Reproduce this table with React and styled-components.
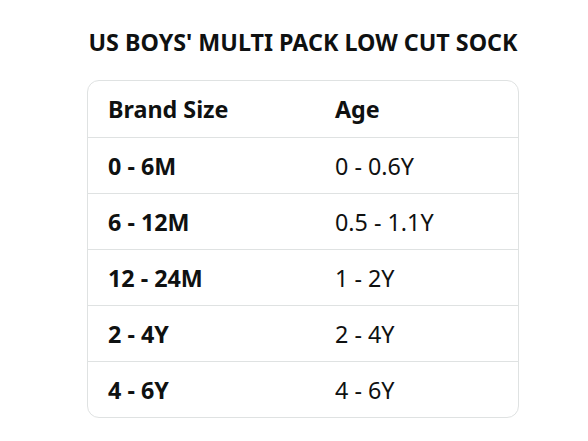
import React from "react";
import styled, { createGlobalStyle } from "styled-components";

const Global = createGlobalStyle`
  html, body { margin: 0; padding: 0; background: #ffffff; }
  body { font-family: "Noto Sans", "Liberation Sans", sans-serif; color: #0f1111; }
`;

const Page = styled.div`
  width: 588px;
  height: 441px;
  box-sizing: border-box;
  padding: 27px 0 0 87px;
`;

const Title = styled.h2`
  margin: 0 0 22px 0;
  width: 432px;
  text-align: center;
  font-size: 23.3px;
  font-weight: 700;
  line-height: 31px;
  letter-spacing: 0;
`;

const Table = styled.div`
  width: 432px;
  border: 1px solid #dfe2e2;
  border-radius: 12px;
  overflow: hidden;
  box-sizing: border-box;
`;

const Row = styled.div`
  display: grid;
  grid-template-columns: 227px 1fr;
  height: 56px;
  align-items: center;
  padding-left: 20px;
  box-sizing: border-box;
  border-top: ${(p) => (p.$first ? "none" : "1px solid #dfe2e2")};
`;

const Cell = styled.div`
  font-size: 23.3px;
  font-weight: ${(p) => (p.$bold ? 700 : 400)};
  line-height: 30px;
`;

const rows = [
  ["0 - 6M", "0 - 0.6Y"],
  ["6 - 12M", "0.5 - 1.1Y"],
  ["12 - 24M", "1 - 2Y"],
  ["2 - 4Y", "2 - 4Y"],
  ["4 - 6Y", "4 - 6Y"],
];

export default function App() {
  return (
    <Page>
      <Global />
      <Title>US BOYS' MULTI PACK LOW CUT SOCK</Title>
      <Table>
        <Row $first>
          <Cell $bold>Brand Size</Cell>
          <Cell $bold>Age</Cell>
        </Row>
        {rows.map(([a, b]) => (
          <Row key={a}>
            <Cell $bold>{a}</Cell>
            <Cell>{b}</Cell>
          </Row>
        ))}
      </Table>
    </Page>
  );
}
